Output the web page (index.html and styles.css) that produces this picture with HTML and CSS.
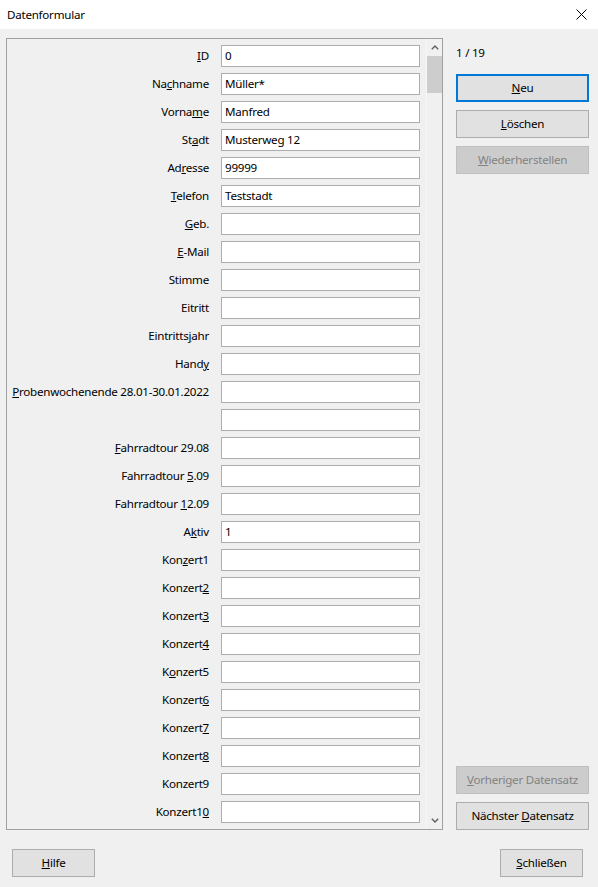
FILE: index.html
```html
<!DOCTYPE html>
<html lang="de">
<head>
<meta charset="utf-8">
<title>Datenformular</title>
<link rel="stylesheet" href="styles.css">
</head>
<body>
<div class="window">
  <div class="titlebar">
    <span class="title">Datenformular</span>
    <svg class="close" width="11" height="11" viewBox="0 0 11 11"><path d="M0.5 0.5 L10.5 10.5 M10.5 0.5 L0.5 10.5" stroke="#000" stroke-width="1" fill="none"/></svg>
  </div>
  <div class="content">
    <div class="main">
      <div class="panel">
        <div class="fields">
          <label class="lbl"><span><u>I</u>D</span></label><div class="inp">0</div>
          <label class="lbl"><span>Na<u>c</u>hname</span></label><div class="inp">Müller*</div>
          <label class="lbl"><span>Vorna<u>m</u>e</span></label><div class="inp">Manfred</div>
          <label class="lbl"><span>St<u>a</u>dt</span></label><div class="inp">Musterweg 12</div>
          <label class="lbl"><span>Ad<u>r</u>esse</span></label><div class="inp">99999</div>
          <label class="lbl"><span><u>T</u>elefon</span></label><div class="inp">Teststadt</div>
          <label class="lbl"><span><u>G</u>eb.</span></label><div class="inp"></div>
          <label class="lbl"><span><u>E</u>-Mail</span></label><div class="inp"></div>
          <label class="lbl"><span>Stimme</span></label><div class="inp"></div>
          <label class="lbl"><span>Eitritt</span></label><div class="inp"></div>
          <label class="lbl"><span>Eintritts<u>j</u>ahr</span></label><div class="inp"></div>
          <label class="lbl"><span>Hand<u>y</u></span></label><div class="inp"></div>
          <label class="lbl"><span><u>P</u>robenwochenende 28.01-30.01.2022</span></label><div class="inp"></div>
          <label class="lbl"><span></span></label><div class="inp"></div>
          <label class="lbl"><span><u>F</u>ahrradtour 29.08</span></label><div class="inp"></div>
          <label class="lbl"><span>Fahrradtour <u>5</u>.09</span></label><div class="inp"></div>
          <label class="lbl"><span>Fahrradtour <u>1</u>2.09</span></label><div class="inp"></div>
          <label class="lbl"><span>A<u>k</u>tiv</span></label><div class="inp">1</div>
          <label class="lbl"><span>Kon<u>z</u>ert1</span></label><div class="inp"></div>
          <label class="lbl"><span>Konzert<u>2</u></span></label><div class="inp"></div>
          <label class="lbl"><span>Konzert<u>3</u></span></label><div class="inp"></div>
          <label class="lbl"><span>Konzert<u>4</u></span></label><div class="inp"></div>
          <label class="lbl"><span>K<u>o</u>nzert5</span></label><div class="inp"></div>
          <label class="lbl"><span>Konzert<u>6</u></span></label><div class="inp"></div>
          <label class="lbl"><span>Konzert<u>7</u></span></label><div class="inp"></div>
          <label class="lbl"><span>Konzert<u>8</u></span></label><div class="inp"></div>
          <label class="lbl"><span>Konzert9</span></label><div class="inp"></div>
          <label class="lbl"><span>Konzert1<u>0</u></span></label><div class="inp"></div>
        </div>
        <div class="scrollbar">
          <div class="arrow"><svg width="8" height="5" viewBox="0 0 8 5"><path d="M0.8 4.2 L4 1 L7.2 4.2" stroke="#606060" stroke-width="1.4" fill="none"/></svg></div>
          <div class="track"><div class="thumb"></div></div>
          <div class="arrow"><svg width="8" height="5" viewBox="0 0 8 5"><path d="M0.8 0.8 L4 4 L7.2 0.8" stroke="#606060" stroke-width="1.4" fill="none"/></svg></div>
        </div>
      </div>
      <div class="side">
        <div class="side-top">
          <div class="counter">1 / 19</div>
          <button class="btn default"><span><u>N</u>eu</span></button>
          <button class="btn"><span><u>L</u>öschen</span></button>
          <button class="btn disabled"><span><u>W</u>iederherstellen</span></button>
        </div>
        <div class="side-bottom">
          <button class="btn disabled"><span><u>V</u>orheriger Datensatz</span></button>
          <button class="btn"><span>Nächster <u>D</u>atensatz</span></button>
        </div>
      </div>
    </div>
    <div class="footer">
      <button class="btn small"><span><u>H</u>ilfe</span></button>
      <button class="btn small"><span><u>S</u>chließen</span></button>
    </div>
  </div>
</div>
</body>
</html>
```
FILE: styles.css
```css
* { box-sizing: border-box; }
html, body { margin: 0; padding: 0; }
body {
  width: 598px;
  height: 887px;
  background: #f0f0f0;
  font-family: "Noto Sans", "Open Sans", "DejaVu Sans", sans-serif;
  font-size: 11.6px;
  letter-spacing: -0.25px;
  color: #000;
  overflow: hidden;
}
u { text-decoration: underline; text-underline-offset: 1px; text-decoration-thickness: 1px; }
.window { width: 598px; height: 887px; display: flex; flex-direction: column; }
.titlebar {
  height: 29px;
  background: #fff;
  display: flex;
  align-items: center;
  justify-content: space-between;
  padding: 0 11px 0 7px;
}
.title { line-height: 16px; }
.close { display: block; margin-top: -1px; }
.content { flex: 1; display: flex; flex-direction: column; padding: 9px 0 0 6px; }
.main { display: flex; gap: 13px; height: 792px; }
.panel {
  width: 437px;
  height: 792px;
  border: 1px solid #a0a0a0;
  display: flex;
  overflow: hidden;
}
.fields {
  flex: 1;
  display: grid;
  grid-template-columns: 202px 199px;
  column-gap: 12px;
  row-gap: 6px;
  grid-auto-rows: 22px;
  align-content: start;
  padding-top: 6px;
  overflow: hidden;
}
.lbl {
  display: flex;
  align-items: center;
  justify-content: flex-end;
  white-space: nowrap;
  line-height: 16px;
}
.inp {
  background: #fff;
  border: 1px solid #adadad;
  padding: 0 3px;
  display: flex;
  align-items: center;
  line-height: 16px;
  white-space: nowrap;
}
.scrollbar {
  width: 16px;
  display: flex;
  flex-direction: column;
  background: #f0f0f0;
  border-left: 1px solid #f7f7f7;
}
.arrow { height: 17px; display: flex; align-items: center; justify-content: center; }
.track { flex: 1; }
.thumb { height: 37px; background: #cdcdcd; }
.side {
  width: 133px;
  display: flex;
  flex-direction: column;
  justify-content: space-between;
}
.side-top { display: flex; flex-direction: column; gap: 8px; }
.counter { line-height: 16px; margin-top: 7px; margin-bottom: 5px; }
.side-bottom { display: flex; flex-direction: column; gap: 8px; }
.btn {
  font-family: inherit;
  font-size: inherit;
  letter-spacing: inherit;
  color: #000;
  height: 28px;
  width: 133px;
  background: #e1e1e1;
  border: 1px solid #adadad;
  padding: 0;
  margin: 0;
  line-height: 16px;
  display: flex;
  align-items: center;
  justify-content: center;
}
.btn.default { border: 2px solid #0078d7; }
.btn.disabled { background: #cccccc; border-color: #bfbfbf; color: #838383; }
.btn.small { width: 83px; }
.footer {
  display: flex;
  justify-content: space-between;
  padding: 19px 15px 0 6px;
}
```
